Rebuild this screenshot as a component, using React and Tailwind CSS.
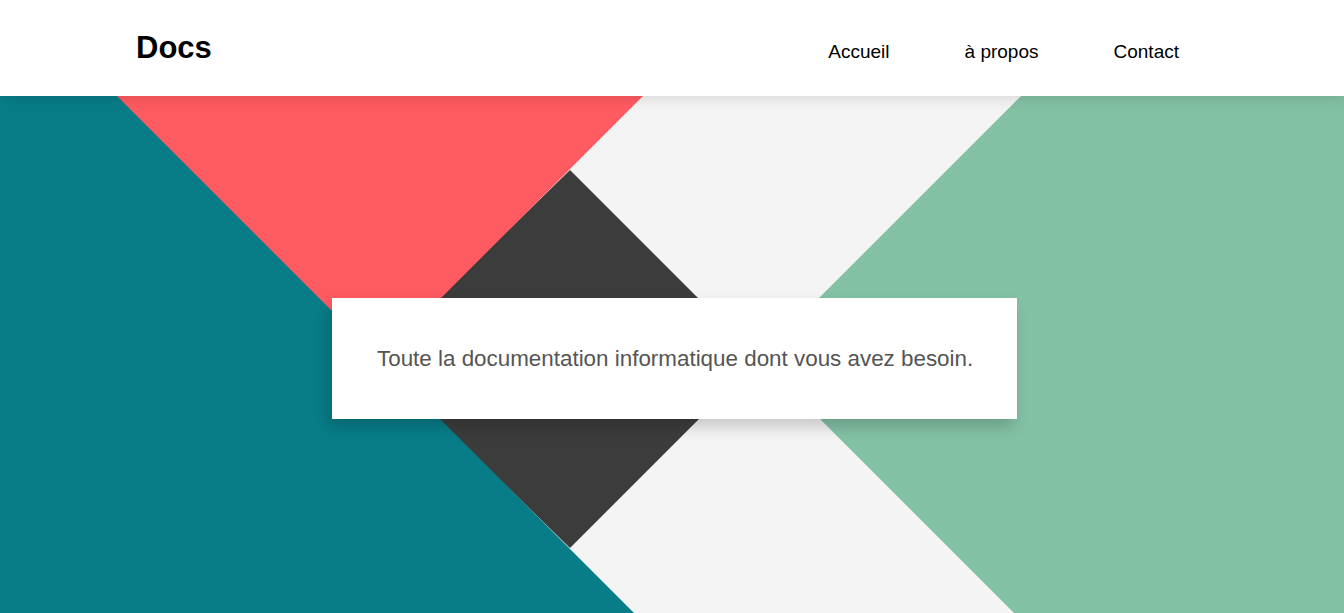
import React from 'react';

const links = ['Accueil', 'à propos', 'Contact'];

// the "X" pattern behind the hero card
// drawn back to front so shared edges don't leave light seams
const HeroPattern = () => (
    <svg
        className="absolute inset-0 w-full h-full"
        viewBox="0 0 1344 517"
        preserveAspectRatio="none"
    >
        <rect x="0" y="0" width="1344" height="517" fill="#f4f4f4" />
        <polygon points="570,74 759,263 570,452 376,263" fill="#3c3c3c" />
        <polygon points="100,0 643,0 380,263 360,263" fill="#fe5b61" />
        <polygon points="0,0 117,0 634,517 0,517" fill="#087d88" />
        <polygon points="1021,0 1344,0 1344,517 1014,517 759,262" fill="#83c1a5" />
    </svg>
);

export default function App() {
    return (
        <div className="min-h-screen bg-white" style={{ fontFamily: '"Liberation Sans", Arial, sans-serif' }}>
            <header className="relative z-10 h-[96px] bg-white shadow-[0_2px_14px_rgba(0,0,0,0.13)] flex items-center pl-[136px] pr-[165px]">
                <h1 className="text-[31px] font-bold text-black">Docs</h1>
                <nav className="ml-auto flex gap-[75px] mt-[8px]">
                    {links.map((l) => (
                        <a key={l} href="#" className="text-[19px] text-black">
                            {l}
                        </a>
                    ))}
                </nav>
            </header>

            <section className="relative h-[517px] overflow-hidden">
                <HeroPattern />
                <div className="relative flex justify-center pt-[202px]">
                    <div className="ml-[5px] w-[685px] h-[121px] bg-white flex items-center pl-[45px] shadow-[-4px_8px_14px_rgba(0,0,0,0.18)]">
                        <p className="text-[22.4px] text-[#555555]">
                            Toute la documentation informatique dont vous avez besoin.
                        </p>
                    </div>
                </div>
            </section>
        </div>
    );
}
